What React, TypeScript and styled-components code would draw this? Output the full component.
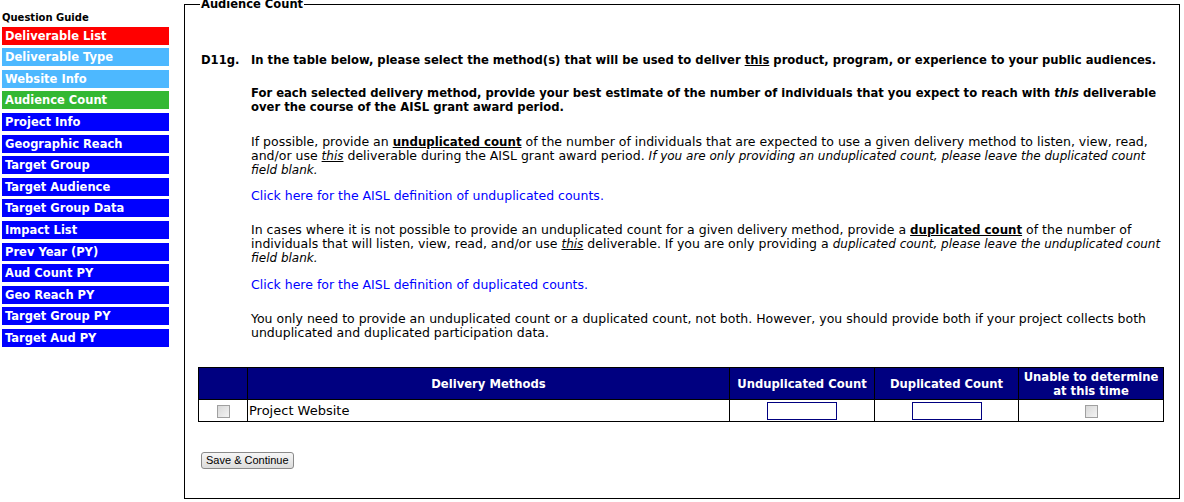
import styled, { createGlobalStyle } from 'styled-components';

const GlobalStyle = createGlobalStyle`
  html, body {
    margin: 0;
    padding: 0;
    background: #fff;
  }
  body {
    font-family: 'DejaVu Sans', Verdana, sans-serif;
    font-size: 12.5px;
    color: #000;
  }
`;

const Page = styled.div`
  display: flex;
  align-items: flex-start;
  gap: 15px;
  padding: 0 4px 0 2px;
`;

const Sidebar = styled.nav`
  width: 167px;
  flex: none;
  padding-top: 12px;
  display: flex;
  flex-direction: column;
  gap: 3.6px;
`;

const GuideTitle = styled.div`
  font-size: 10px;
  font-weight: bold;
  line-height: 12px;
  margin-bottom: -1px;
`;

const NavItem = styled.a<{ $bg: string }>`
  display: block;
  height: 18px;
  line-height: 18px;
  padding-left: 3px;
  background: ${(p) => p.$bg};
  color: #fff;
  font-weight: bold;
  font-size: 11.5px;
  text-decoration: none;
  white-space: nowrap;
`;

const Fieldset = styled.fieldset`
  flex: 1;
  margin: -3px 0 0 0;
  border: 1px solid #000;
  padding: 42px 5px 30px 13px;
  height: 502px;
  box-sizing: border-box;
`;

const Legend = styled.legend`
  font-weight: bold;
  font-size: 11.5px;
  padding: 0 1px;
  margin-left: 2px;
`;

const Question = styled.div`
  display: grid;
  grid-template-columns: 50px 1fr;
  padding-left: 3px;
  line-height: 14px;
`;

const QNum = styled.div`
  font-weight: bold;
  font-size: 11.6px;
`;

const Body = styled.div`
  display: flex;
  flex-direction: column;
`;

const Para = styled.p<{ $bold?: boolean; $gap?: number }>`
  margin: 0 0 ${(p) => p.$gap ?? 14}px 0;
  font-weight: ${(p) => (p.$bold ? 'bold' : 'normal')};
  font-size: ${(p) => (p.$bold ? '11.6px' : '12.5px')};

  b {
    font-size: 11.8px;
  }
`;

const Note = styled.i`
  font-size: 12px;
`;

const LinkText = styled.a`
  color: #0000ff;
  text-decoration: none;
  cursor: pointer;
`;

const Table = styled.table`
  border-collapse: collapse;
  width: 966px;
  margin-top: 27px;
`;

const Th = styled.th<{ $w?: number }>`
  background: #000080;
  color: #fff;
  font-weight: bold;
  font-size: 11.6px;
  line-height: 14px;
  height: 31px;
  padding: 0 2px;
  border: 1px solid #000;
  width: ${(p) => (p.$w ? `${p.$w}px` : 'auto')};
  text-align: center;
`;

const Td = styled.td<{ $align?: string }>`
  border: 1px solid #000;
  height: 21px;
  padding: 0 1px;
  text-align: ${(p) => p.$align ?? 'center'};
  font-size: 13px;
`;

const Check = styled.span`
  display: inline-block;
  width: 11px;
  height: 11px;
  border: 1px solid #a0a0a0;
  background: linear-gradient(135deg, #d8d8d8, #f4f4f4);
  vertical-align: middle;
`;

const CountInput = styled.input`
  width: 66px;
  height: 14px;
  border: 1px solid #000080;
  padding: 1px;
  font-size: 11px;
  vertical-align: middle;
`;

const SaveButton = styled.button`
  margin-top: 30px;
  margin-left: 3px;
  font-family: 'Liberation Sans', Arial, sans-serif;
  font-size: 11px;
  height: 17px;
  padding: 0 4px;
  border: 1px solid #8a8a8a;
  border-radius: 3px;
  background: linear-gradient(#f6f6f6, #dcdcdc);
  color: #000;
  line-height: 13px;
`;

const nav = [
  { label: 'Deliverable List', bg: '#ff0000' },
  { label: 'Deliverable Type', bg: '#4db8ff' },
  { label: 'Website Info', bg: '#4db8ff' },
  { label: 'Audience Count', bg: '#33b833' },
  { label: 'Project Info', bg: '#0000ff' },
  { label: 'Geographic Reach', bg: '#0000ff' },
  { label: 'Target Group', bg: '#0000ff' },
  { label: 'Target Audience', bg: '#0000ff' },
  { label: 'Target Group Data', bg: '#0000ff' },
  { label: 'Impact List', bg: '#0000ff' },
  { label: 'Prev Year (PY)', bg: '#0000ff' },
  { label: 'Aud Count PY', bg: '#0000ff' },
  { label: 'Geo Reach PY', bg: '#0000ff' },
  { label: 'Target Group PY', bg: '#0000ff' },
  { label: 'Target Aud PY', bg: '#0000ff' },
];

export default function App() {
  return (
    <>
      <GlobalStyle />
      <Page>
        <Sidebar>
          <GuideTitle>Question Guide</GuideTitle>
          {nav.map((item) => (
            <NavItem key={item.label} $bg={item.bg}>
              {item.label}
            </NavItem>
          ))}
        </Sidebar>

        <Fieldset>
          <Legend>Audience Count</Legend>
          <Question>
            <QNum>D11g.</QNum>
            <Body>
              <Para $bold $gap={19}>
                In the table below, please select the method(s) that will be used to deliver <u>this</u> product,
                program, or experience to your public audiences.
              </Para>
              <Para $bold $gap={21}>
                For each selected delivery method, provide your best estimate of the number of individuals that you
                expect to reach with <i>this</i> deliverable over the course of the AISL grant award period.
              </Para>
              <Para $gap={12}>
                If possible, provide an <b><u>unduplicated count</u></b> of the number of individuals that are
                expected to use a given delivery method to listen, view, read, and/or use <Note><u>this</u></Note>{' '}
                deliverable during the AISL grant award period.{' '}
                <Note>If you are only providing an unduplicated count, please leave the duplicated count field blank.</Note>
              </Para>
              <Para $gap={20}>
                <LinkText>Click here for the AISL definition of unduplicated counts.</LinkText>
              </Para>
              <Para $gap={13}>
                In cases where it is not possible to provide an unduplicated count for a given delivery method,
                provide a <b><u>duplicated count</u></b> of the number of individuals that will listen, view, read,
                and/or use <Note><u>this</u></Note> deliverable. If you are only providing a{' '}
                <Note>duplicated count, please leave the unduplicated count field blank.</Note>
              </Para>
              <Para $gap={20}>
                <LinkText>Click here for the AISL definition of duplicated counts.</LinkText>
              </Para>
              <Para $gap={0}>
                You only need to provide an unduplicated count or a duplicated count, not both. However, you should
                provide both if your project collects both unduplicated and duplicated participation data.
              </Para>
            </Body>
          </Question>

          <Table>
            <thead>
              <tr>
                <Th $w={44} />
                <Th>Delivery Methods</Th>
                <Th $w={140}>Unduplicated Count</Th>
                <Th $w={139}>Duplicated Count</Th>
                <Th $w={140}>Unable to determine at this time</Th>
              </tr>
            </thead>
            <tbody>
              <tr>
                <Td>
                  <Check />
                </Td>
                <Td $align="left">Project Website</Td>
                <Td>
                  <CountInput type="text" />
                </Td>
                <Td>
                  <CountInput type="text" />
                </Td>
                <Td>
                  <Check />
                </Td>
              </tr>
            </tbody>
          </Table>

          <SaveButton>Save &amp; Continue</SaveButton>
        </Fieldset>
      </Page>
    </>
  );
}
